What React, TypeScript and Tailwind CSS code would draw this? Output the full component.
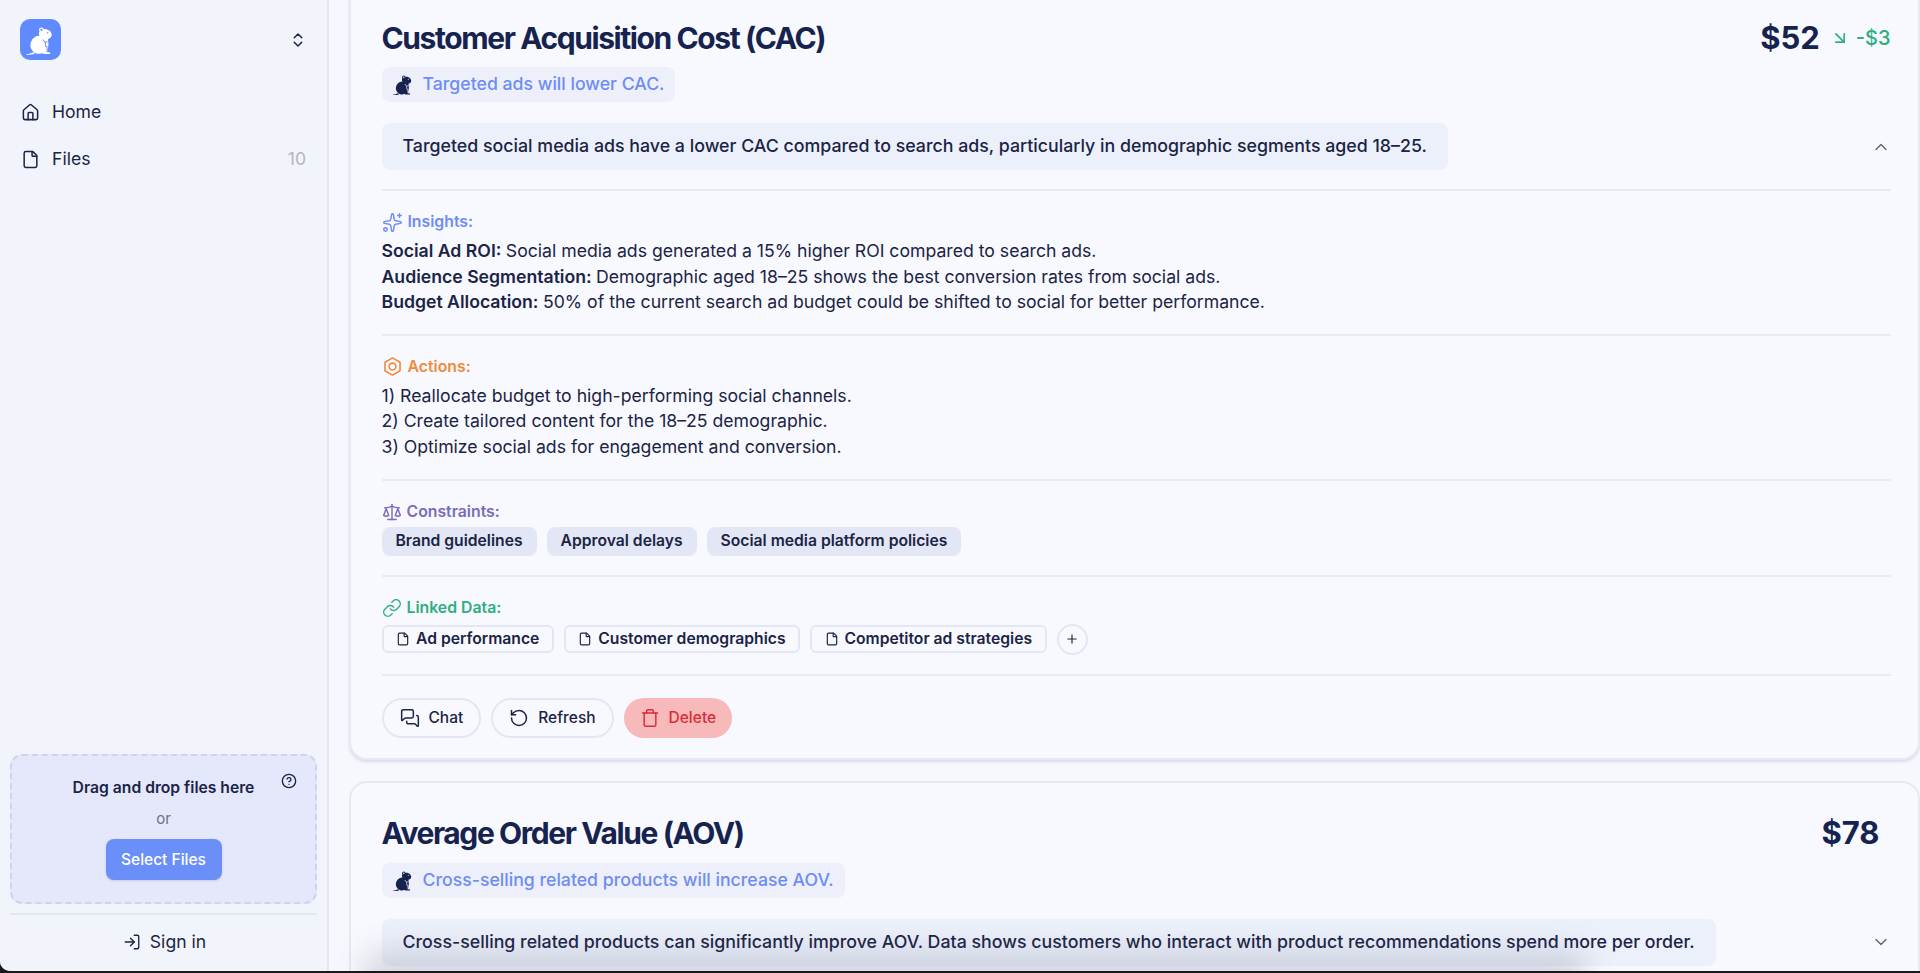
import { ReactNode } from 'react'
import {
  ArrowDownRight,
  ChevronDown,
  ChevronUp,
  ChevronsUpDown,
  CircleHelp,
  File,
  House,
  Link,
  LogIn,
  MessagesSquare,
  Plus,
  RotateCcw,
  Scale,
  Sparkles,
  Trash,
} from 'lucide-react'

function Gopher({ className, detail }: { className?: string; detail: string }) {
  return (
    <svg viewBox="0 0 24 24" className={className} fill="currentColor">
      <ellipse cx="10.500" cy="15.600" rx="6.400" ry="6.800" transform="rotate(18 10.500 15.600)" />
      <ellipse cx="15.200" cy="7.600" rx="4.900" ry="3.700" transform="rotate(14 15.200 7.600)" />
      <circle cx="12.300" cy="4.400" r="1.800" />
      <path d="M11 9l6 .5 .6 6-1 6.500h-6z" />
      <path d="M.8 22.600c2-.1 3.700-.5 5.400-1.400l1.200 1.300c-2.200.6-4.400.6-6.600.5z" />
      <path d="M14 21.200h4.300c.6.200.8.800.4 1.300H13.500z" />
      <path d="M13.600 11.800l1.500 1.900 1.700-.3M15.100 13.700l.5 3.300M16.400 16.800l.3 4" fill="none" stroke={detail} strokeWidth="0.700" strokeLinecap="round" />
      <circle cx="12.300" cy="4.400" r="0.800" fill={detail} />
      <circle cx="17" cy="6.600" r="0.550" fill={detail} />
    </svg>
  )
}

function NutIcon({ className }: { className?: string }) {
  return (
    <svg viewBox="0 0 24 24" className={className} fill="none" stroke="currentColor" strokeWidth="1.800" strokeLinejoin="round">
      <path d="M12 2.200l8.600 4.900v9.800L12 21.800l-8.600-4.900V7.100z" />
      <circle cx="12" cy="12" r="3.900" />
    </svg>
  )
}

function Label({ icon, color, children }: { icon: ReactNode; color: string; children: ReactNode }) {
  return (
    <div className={`flex h-5 items-center gap-[5px] text-[15.800px] font-semibold ${color}`}>
      {icon}
      <span>{children}</span>
    </div>
  )
}

function Line({ bold, children }: { bold?: string; children: ReactNode }) {
  return (
    <p className="text-[17.650px] leading-[25.600px] text-[#1b2445]">
      {bold && <span className="font-semibold">{bold} </span>}
      {children}
    </p>
  )
}

function Hypothesis({ pill, summary, open }: { pill: string; summary: string; open?: boolean }) {
  return (
    <>
      <div className="mt-[9px] flex h-[35px] w-fit items-center gap-2 rounded-lg bg-[#edf0fb] pl-[10px] pr-[11px]">
        <Gopher className="h-[23px] w-[23px] text-[#17234f]" detail="#edf0fb" />
        <span className="text-[17.700px] font-medium text-[#6d8cf5]">{pill}</span>
      </div>
      <div className="mt-[21px] flex items-center justify-between">
        <div className="flex h-[47px] items-center rounded-lg bg-[#ecf0fa] px-[21px] text-[17.800px] font-medium text-[#1b2445]">
          {summary}
        </div>
        {open ? (
          <ChevronUp className="h-5 w-5 text-[#5b6275]" strokeWidth={1.600} />
        ) : (
          <ChevronDown className="h-5 w-5 text-[#5b6275]" strokeWidth={1.600} />
        )}
      </div>
    </>
  )
}

function Chip({ children }: { children: ReactNode }) {
  return (
    <span className="flex h-[29px] items-center rounded-lg bg-[#e3e7f5] px-[14px] text-[15.700px] font-semibold text-[#1b2445]">
      {children}
    </span>
  )
}

function FileChip({ children }: { children: ReactNode }) {
  return (
    <span className="flex h-[28px] items-center gap-[6px] rounded-md border-2 border-[#e3e7f3] px-[12.500px] text-[15.700px] font-semibold text-[#1b2445]">
      <File className="h-[14px] w-[14px]" strokeWidth={2} />
      {children}
    </span>
  )
}

function OutlineButton({ icon, children }: { icon: ReactNode; children: ReactNode }) {
  return (
    <button className="flex h-10 items-center gap-[9px] rounded-full border-2 border-[#e3e7f3] px-4 text-[15.500px] font-medium text-[#1b2445]">
      {icon}
      {children}
    </button>
  )
}

function Sidebar() {
  return (
    <aside className="flex w-[329px] shrink-0 flex-col border-r-2 border-[#e3e6f3] bg-[#f2f4fc] px-[10px]">
      <div className="flex items-center justify-between pl-[10px] pr-[10px] pt-[19px]">
        <div className="flex h-[41px] w-[41px] items-center justify-center rounded-[10px] bg-[#5f8bff]">
          <Gopher className="h-[32px] w-[32px] text-white" detail="#5f8bff" />
        </div>
        <ChevronsUpDown className="h-[18px] w-[18px] text-[#1b2445]" strokeWidth={2} />
      </div>
      <nav className="mt-10 flex flex-col gap-[23px] px-[11px] text-[17.600px] text-[#1b2445]">
        <div className="flex h-6 items-center gap-[12px]">
          <House className="h-[19px] w-[19px]" strokeWidth={1.900} />
          Home
        </div>
        <div className="flex h-6 items-center gap-[12px]">
          <File className="h-[19px] w-[19px]" strokeWidth={1.900} />
          <span className="flex-1">Files</span>
          <span className="font-normal text-[#b3b6c3]">10</span>
        </div>
      </nav>
      <div className="relative mt-auto flex h-[150px] flex-col items-center rounded-xl border-2 border-dashed border-[#cdd3f1] bg-[#e4e8fa] pt-[22px]">
        <CircleHelp className="absolute right-[18px] top-[17px] h-4 w-4 text-[#1b2445]" strokeWidth={2} />
        <div className="text-[15.700px] font-semibold leading-5 text-[#1b2445]">Drag and drop files here</div>
        <div className="mt-[11px] text-[15px] leading-5 text-[#6d7285]">or</div>
        <button className="mt-[10px] h-[41px] w-[116px] rounded-lg bg-[#6a8ff9] text-[15.500px] font-medium text-white shadow-sm">
          Select Files
        </button>
      </div>
      <div className="mb-[2px] mt-[9px] flex h-[56px] items-center justify-center gap-[9px] border-t-2 border-[#e3e6f3] pl-[2px] text-[17.600px] text-[#1b2445]">
        <LogIn className="h-[18px] w-[18px]" strokeWidth={1.800} />
        Sign in
      </div>
    </aside>
  )
}

export default function App() {
  return (
    <div className="h-[973px] w-full overflow-hidden bg-[#1a1a1a] font-['Inter',sans-serif]">
      <div className="relative flex h-[971px] overflow-hidden rounded-bl-[10px] bg-[#f7f8fd]">
        <Sidebar />
        <main className="min-w-0 flex-1 overflow-hidden pl-5">
          <div className="-mt-[15px] flex flex-col gap-[21px]">
            <section className="rounded-[18px] border-2 border-[#e6e9f4] bg-[#f8f9fe] pb-5 pl-[30.500px] pr-[27.500px] pt-[31px] shadow-[0_2px_3px_rgba(100,110,150,0.2)]">
              <div className="flex h-10 items-center justify-between">
                <h2 className="text-[30px] font-bold tracking-[-0.047em] text-[#17234f]">Customer Acquisition Cost (CAC)</h2>
                <div className="flex items-center">
                  <span className="text-[31px] font-bold text-[#17234f]">$52</span>
                  <ArrowDownRight className="ml-[10px] h-5 w-5 text-[#2fae82]" strokeWidth={2} />
                  <span className="ml-[6px] text-[20px] font-medium text-[#2fae82]">-$3</span>
                </div>
              </div>
              <Hypothesis
                open
                pill="Targeted ads will lower CAC."
                summary="Targeted social media ads have a lower CAC compared to search ads, particularly in demographic segments aged 18–25."
              />
              <div className="mt-[19px] border-t-2 border-[#e8eaf4] pb-[19px] pt-[21px]">
                <Label color="text-[#6d8cf5]" icon={<Sparkles className="h-[21px] w-[21px]" strokeWidth={1.700} />}>
                  Insights:
                </Label>
                <div className="mt-[6px]">
                  <Line bold="Social Ad ROI:">Social media ads generated a 15% higher ROI compared to search ads.</Line>
                  <Line bold="Audience Segmentation:">Demographic aged 18–25 shows the best conversion rates from social ads.</Line>
                  <Line bold="Budget Allocation:">50% of the current search ad budget could be shifted to social for better performance.</Line>
                </div>
              </div>
              <div className="border-t-2 border-[#e8eaf4] pb-[19px] pt-[21px]">
                <Label color="text-[#f08a3c]" icon={<NutIcon className="h-[21px] w-[21px]" />}>
                  Actions:
                </Label>
                <div className="mt-[6px]">
                  <Line>1) Reallocate budget to high-performing social channels.</Line>
                  <Line>2) Create tailored content for the 18–25 demographic.</Line>
                  <Line>3) Optimize social ads for engagement and conversion.</Line>
                </div>
              </div>
              <div className="border-t-2 border-[#e8eaf4] pb-[19px] pt-[21px]">
                <Label color="text-[#7a6bb8]" icon={<Scale className="h-[20px] w-[20px]" strokeWidth={1.700} />}>
                  Constraints:
                </Label>
                <div className="mt-[5px] flex gap-[10px]">
                  <Chip>Brand guidelines</Chip>
                  <Chip>Approval delays</Chip>
                  <Chip>Social media platform policies</Chip>
                </div>
              </div>
              <div className="border-t-2 border-[#e8eaf4] pb-[19px] pt-[21px]">
                <Label color="text-[#2fae82]" icon={<Link className="h-[20px] w-[20px]" strokeWidth={1.700} />}>
                  Linked Data:
                </Label>
                <div className="mt-[6px] flex items-center gap-[10px]">
                  <FileChip>Ad performance</FileChip>
                  <FileChip>Customer demographics</FileChip>
                  <FileChip>Competitor ad strategies</FileChip>
                  <span className="flex h-[31px] w-[31px] items-center justify-center rounded-full border-2 border-[#e3e7f3] text-[#1b2445]">
                    <Plus className="h-[14px] w-[14px]" strokeWidth={2} />
                  </span>
                </div>
              </div>
              <div className="flex gap-[10px] border-t-2 border-[#e8eaf4] pt-[22px]">
                <OutlineButton icon={<MessagesSquare className="h-5 w-5" strokeWidth={1.800} />}>Chat</OutlineButton>
                <OutlineButton icon={<RotateCcw className="h-5 w-5" strokeWidth={1.800} />}>Refresh</OutlineButton>
                <button className="flex h-10 items-center gap-[9px] rounded-full bg-[#f7b9b9] px-4 text-[15.500px] font-medium text-[#d92d3a]">
                  <Trash className="h-5 w-5" strokeWidth={1.800} />
                  Delete
                </button>
              </div>
            </section>
            <section className="rounded-[18px] border-2 border-[#e6e9f4] bg-[#f8f9fe] pb-8 pl-[30.500px] pr-[27.500px] pt-[31px]">
              <div className="flex h-10 items-center justify-between">
                <h2 className="text-[30px] font-bold tracking-[-0.047em] text-[#17234f]">Average Order Value (AOV)</h2>
                <span className="mr-[11px] text-[31px] font-bold text-[#17234f]">$78</span>
              </div>
              <Hypothesis
                pill="Cross-selling related products will increase AOV."
                summary="Cross-selling related products can significantly improve AOV. Data shows customers who interact with product recommendations spend more per order."
              />
            </section>
          </div>
        </main>
        <div className="absolute left-[380px] top-[971px] h-5 w-[1190px] shadow-[0_-6px_30px_14px_rgba(90,100,130,0.22)]" />
      </div>
    </div>
  )
}
